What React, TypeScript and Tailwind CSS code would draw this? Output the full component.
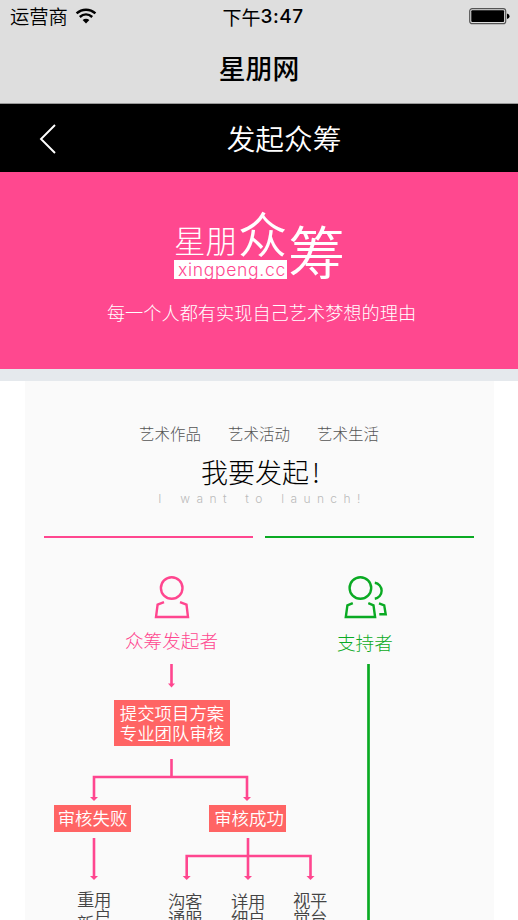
import React from "react";

const light = "font-['Noto_Sans_CJK_SC_Light','Noto_Sans_CJK_SC',sans-serif] font-light";
const box = "absolute flex items-center justify-center bg-[#ff6464] text-white text-[17.4px] whitespace-nowrap";

function Column({ left, top, step, text }: { left: number; top: number; step: number; text: string }) {
  return (
    <div className="absolute flex flex-col text-[17.4px] text-[#444]" style={{ left, top }}>
      {text.split("").map((c) => (
        <span key={c} style={{ height: step, lineHeight: step + "px" }}>{c}</span>
      ))}
    </div>
  );
}

function Wifi() {
  return (
    <svg width="22" height="16" viewBox="0 0 22 16" className="ml-[7px] mt-[-2px]" fill="none" stroke="#000" strokeWidth="2.5">
      <path d="M1.6 5.4C7 0.500 15 0.500 20.400 5.400" />
      <path d="M4.8 9C8.5 5.7 13.5 5.7 17.2 9" />
      <path d="M7.600 12C9.600 10.200 12.400 10.200 14.400 12L11 15.400Z" fill="#000" stroke="none" />
    </svg>
  );
}

function Flow() {
  return (
    <div className="relative h-[367px] w-full overflow-hidden">
      <svg className="absolute left-0 top-0" width="468" height="367" viewBox="25 553 468 367" fill="none">
        <g stroke="#ff468f" strokeWidth="2.4">
          <circle cx="171.7" cy="588" r="10.8" />
          <path d="M164 602.2L157.6 604.6L156 617H188L186.500 604.6L180 602.2" />
          <path d="M171.500 664V684M171.500 759V777M94 797V777H247V797M94 838V876M248 838V876M186.700 876V856H310.500V876" strokeWidth="2.6" />
        </g>
        <g fill="#ff468f">
          <path d="M168 683.500H175L171.500 687.500Z" />
          <path d="M90 797H98L94 801Z" />
          <path d="M243 797H251L247 801Z" />
          <path d="M90 876H98L94 880Z" />
          <path d="M182.700 876H190.700L186.700 880Z" />
          <path d="M244 876H252L248 880Z" />
          <path d="M306.500 876H314.500L310.500 880Z" />
        </g>
        <g stroke="#0aaa23" strokeWidth="2.4">
          <circle cx="360.400" cy="588" r="10.800" />
          <path d="M352.800 603.200L347.400 605.300L345.800 617H375.100L373.500 605.300L368.300 603.200" />
          <path d="M374.800 582.800A8.100 8.100 0 0 1 374.800 598.800" />
          <path d="M379 603.400L384.200 605.300L385.700 614.200H379.300" />
          <path d="M368.500 664V920" strokeWidth="2.700" />
        </g>
      </svg>
      <div className={light + " absolute left-[100px] top-[74px] text-[18.6px] leading-[26px] text-[#ff468f]"}>众筹发起者</div>
      <div className={light + " absolute left-[312px] top-[76px] text-[18.6px] leading-[26px] text-[#0aaa23]"}>支持者</div>
      <div className={box + " left-[89px] top-[147px] h-[46px] w-[116px] pb-px text-center leading-[20px]"}>
        提交项目方案<br />专业团队审核
      </div>
      <div className={box + " left-[29px] top-[252px] h-[27px] w-[77px]"}>审核失败</div>
      <div className={box + " left-[184px] top-[252px] h-[27px] w-[77px] pl-[3px]"}>审核成功</div>
      <Column left={52} top={334} step={24} text="重新" />
      <Column left={69} top={337} step={17} text="用户" />
      <Column left={143} top={339} step={17} text="沟通" />
      <Column left={160} top={339} step={17} text="客服" />
      <Column left={206} top={339} step={17} text="详细" />
      <Column left={223} top={339} step={17} text="用户" />
      <Column left={268} top={338} step={17} text="视觉" />
      <Column left={285} top={338} step={17} text="平台" />
    </div>
  );
}

export default function App() {
  return (
    <div className="flex h-[920px] w-[518px] flex-col overflow-hidden bg-white font-['Noto_Sans_CJK_SC_DemiLight','Noto_Sans_CJK_SC',sans-serif] font-[350]">
      <header className="h-[104px] border-b border-[#999] bg-[#dedede] text-black">
        <div className="grid h-[33px] grid-cols-3 items-center px-[10px]">
          <div className="flex items-center text-[19.3px] leading-[33px]">运营商<Wifi /></div>
          <div className="flex items-center justify-center whitespace-nowrap pl-[8px] font-['Noto_Sans_CJK_SC',sans-serif] text-[19px] font-normal leading-[33px]">
            下午<span className="font-['Inter'] text-[19px] font-medium tracking-[0.5px]">3:47</span>
          </div>
          <div className="flex justify-end">
            <svg width="41" height="17" viewBox="0 0 41 17" className="mr-[-2px]">
              <rect x="0.700" y="0.700" width="36" height="15" rx="2.500" fill="none" stroke="#555" strokeWidth="1.200" />
              <rect x="2.300" y="2.300" width="32.800" height="11.800" rx="1" />
              <path d="M38 5.500Q40.500 6 40.500 8.200Q40.500 10.500 38 11Z" />
            </svg>
          </div>
        </div>
        <h1 className="h-[70px] text-center font-['Noto_Sans_CJK_SC',sans-serif] text-[26.8px] font-medium leading-[69px]">星朋网</h1>
      </header>
      <nav className="grid h-[68px] shrink-0 grid-cols-3 items-center bg-black pb-px text-white">
        <svg width="18" height="30" viewBox="0 0 18 30" className="ml-[39px] mt-[2px]" fill="none" stroke="#fff" strokeWidth="1.900">
          <path d="M16 1L2 15L16 29" />
        </svg>
        <h2 className="whitespace-nowrap pl-[54px] text-[28.700px] leading-[67px]">发起众筹</h2>
      </nav>
      <section className="flex h-[197px] shrink-0 flex-col items-center bg-[#ff488f] text-white">
        <div className="mt-[34px] flex h-[84px] w-[170px] items-start">
          <div className="flex w-[114px] shrink-0 flex-col">
            <div className="flex h-[54px]">
              <span className={light + " mt-[15px] text-[31.500px] leading-[36px]"}>星朋</span>
              <span className="mt-px pl-[1px] text-[49px] leading-[50px]">众</span>
            </div>
            <div className="flex h-[19px] w-[113px] items-center justify-center bg-white pl-[3px] font-['Inter'] text-[17.500px] font-light leading-[19px] tracking-[0.700px] text-[#ff488f]">xingpeng.cc</div>
          </div>
          <span className="mt-[13px] text-[57px] leading-[60px]">筹</span>
        </div>
        <p className={light + " mt-[7px] pl-[5px] text-[18.200px] leading-[30px]"}>每一个人都有实现自己艺术梦想的理由</p>
      </section>
      <div className="h-[12px] shrink-0 bg-[#e5e9ed]" />
      <main className="ml-[25px] flex h-[539px] w-[469px] shrink-0 flex-col items-center bg-[#fafafa]">
        <div className={light + " mr-px mt-[41px] flex h-[22px] gap-[27px] text-[15.500px] leading-[22px] text-[#555]"}>
          <span>艺术作品</span>
          <span>艺术活动</span>
          <span>艺术生活</span>
        </div>
        <div className={light + " mt-[10px] flex h-[36px] pl-[2px] text-[27px] leading-[36px] text-black"}>我要发起<span className="pl-[3px]">!</span></div>
        <div className="h-[16px] whitespace-pre pl-[6px] font-['Inter'] text-[12px] font-light leading-[17px] tracking-[6.400px] [word-spacing:2.700px] text-[#bbb]">I want to launch!</div>
        <div className="mt-[30px] flex w-full gap-[12px] pl-[19px]">
          <div className="h-[2px] w-[209px] bg-[#ff468f]" />
          <div className="h-[2px] w-[209px] bg-[#0aaa23]" />
        </div>
        <div className="mt-[15px] w-full"><Flow /></div>
      </main>
    </div>
  );
}
